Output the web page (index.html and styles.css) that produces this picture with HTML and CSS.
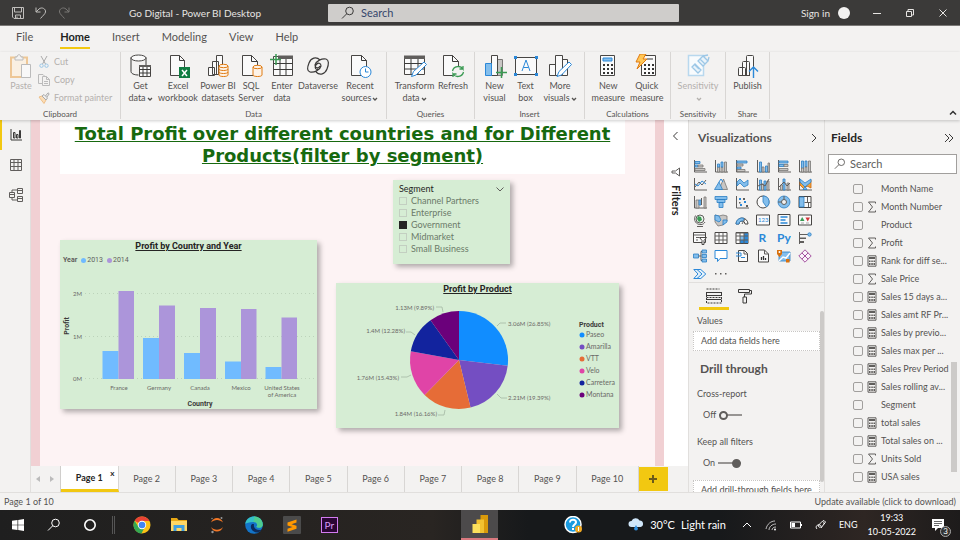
FILE: index.html
```html
<!DOCTYPE html>
<html lang="en">
<head>
<meta charset="utf-8">
<title>Go Digital - Power BI Desktop</title>
<link rel="stylesheet" href="styles.css">
</head>
<body>
<svg class="defs" aria-hidden="true">
  <symbol id="chev-down" viewBox="0 0 6 6"><path class="cur" d="M1 2l2 2 2-2"/></symbol>
  <symbol id="magnifier" viewBox="0 0 14 14"><circle class="cur" cx="8.5" cy="5" r="3.8"/><path class="cur" d="M5.7 7.8L1 12.5"/></symbol>
  <symbol id="sigma" viewBox="0 0 10 12"><path class="g" d="M8.5 2.5V1H1.5L5.5 6l-4 5h7V9.500"/></symbol>
  <symbol id="calc" viewBox="0 0 10 12"><path class="g" d="M1 .8h8v10.400H1z"/><path class="gf" d="M2 2h6v2H2zM2 5.500h1.500V7H2zM4.300 5.500h1.500V7H4.300zM6.500 5.500H8V7H6.500zM2 8h1.500v2H2zM4.300 8h1.500v2H4.300zM6.500 8H8v2H6.500z"/></symbol>
</svg>

<header class="titlebar">
  <div class="title-left">
    <button class="bare" aria-label="Save"><svg width="12" height="12" viewBox="0 0 12 12"><path class="cur" d="M.5.5h11v11H2L.5 10zM2.500.5V5h7V.5M3.500 11.500V8h5v3.500M5 11V9.500"/></svg></button>
    <button class="bare" aria-label="Undo"><svg width="12" height="12" viewBox="0 0 12 12"><path class="cur" d="M1 .5v4.500h4.500M1 5l3-3c3-2.500 7 0 6.500 3-.3 2-3 4-5 6.500"/></svg></button>
    <button class="bare dim" aria-label="Redo"><svg width="12" height="12" viewBox="0 0 12 12"><path class="cur" d="M11 .5v4.500H6.500M11 5L8 2C5-.5 1 2 1.500 5c.3 2 3 4 5 6.500"/></svg></button>
    <span class="app-title">Go Digital - Power BI Desktop</span>
  </div>
  <label class="top-search"><svg width="14" height="14"><use href="#magnifier"/></svg><input type="text" placeholder="Search" aria-label="Search"></label>
  <div class="title-right">
    <button class="bare">Sign in</button>
    <span class="avatar"></span>
    <button class="bare win" aria-label="Minimize"><svg width="10" height="10" viewBox="0 0 10 10"><path class="cur" d="M1 5.500h8"/></svg></button>
    <button class="bare win" aria-label="Restore"><svg width="10" height="10" viewBox="0 0 10 10"><path class="cur" d="M1.500 3.500h5v5h-5zM3 3.500v-2h5.500V7h-2"/></svg></button>
    <button class="bare win" aria-label="Close"><svg width="10" height="10" viewBox="0 0 10 10"><path class="cur" d="M1.500 1.500l7 7M8.500 1.500l-7 7"/></svg></button>
  </div>
</header>

<nav class="menu">
  <button class="file">File</button><button class="on">Home</button><button>Insert</button><button>Modeling</button><button>View</button><button>Help</button>
</nav>

<section class="ribbon">
  <div class="group clipboard">
    <div class="tools">
      <button class="tool off"><svg width="24" height="24" viewBox="0 0 24 24"><path d="M2 3.500h16V23H2z" fill="#faf0e2" stroke="#eec796" stroke-width="2"/><path d="M6 6V3h2c0-3 4-3 4 0h2v3z" fill="#f3f2f1" stroke="#bbb"/><path d="M12.500 10.500h9v13h-9z" fill="#f8f8f8" stroke="#bbb"/></svg><span>Paste</span></button>
      <div class="stack">
        <button class="small off"><svg width="12" height="12" viewBox="0 0 12 12"><path d="M3 0l4.500 8M9 0L4.500 8" fill="none" stroke="#aaa"/><circle cx="3.500" cy="9.700" r="1.700" fill="none" stroke="#9cc7e6"/><circle cx="8.500" cy="9.700" r="1.700" fill="none" stroke="#9cc7e6"/></svg>Cut</button>
        <button class="small off"><svg width="12" height="12" viewBox="0 0 12 12"><path d="M4 9.500H.5v-9H5l2 2M4.500 2.500h4l3 3v6h-7zM8.500 2.500v3h3M6 7.500h4M6 9.500h4" fill="none" stroke="#bbb"/></svg>Copy</button>
        <button class="small off"><svg width="12" height="12" viewBox="0 0 12 12"><path d="M1 5l3-1 4 4-2 3.500z" fill="#fbdcb5" stroke="#edc08a"/><path d="M4 4l2-1.500 3.500 3.500L8 8zM7.500 4L10 .8l1.200 1L9 5" fill="#eee" stroke="#aaa"/></svg>Format painter</button>
      </div>
    </div>
    <h3>Clipboard</h3>
  </div>
  <div class="group data">
    <div class="tools">
      <button class="tool"><svg width="24" height="24" viewBox="0 0 24 24"><path class="k" d="M2 3.500v14c0 2 3 3.500 7.500 3.500M17 3.500V11"/><ellipse class="w" cx="9.500" cy="4" rx="7.500" ry="3"/><path class="w" d="M10.500 11.500h11v11h-11z"/><path class="k" d="M10.500 15.500h11M10.500 19h11M14 13v9M18 13v9"/><path class="gf" d="M10 11h12v2H10z"/></svg><span>Get<br>data<svg class="cv" width="6" height="6"><use href="#chev-down"/></svg></span></button>
      <button class="tool"><svg width="24" height="24" viewBox="0 0 24 24"><path class="w" d="M4.500 1.500h9l5 5v15h-14z"/><path class="k" d="M13.500 1.500v5h5"/><path d="M13 13h11v11H13z" fill="#107c41"/><path d="M16 16l5 6M21 16l-5 6" stroke="#fff" stroke-width="1.500"/></svg><span>Excel<br>workbook</span></button>
      <button class="tool"><svg width="24" height="24" viewBox="0 0 24 24"><path class="w" d="M10.500 1.500h6v19h-6zM6.500 7.500h6v13h-6zM2.500 13.500h6v8h-6z"/><path class="o" d="M13 12v9c0 2 9 2 9 0v-9M13 15c0 2 9 2 9 0M13 18c0 2 9 2 9 0"/><ellipse class="o" cx="17.500" cy="12" rx="4.500" ry="1.700"/></svg><span>Power BI<br>datasets</span></button>
      <button class="tool"><svg width="24" height="24" viewBox="0 0 24 24"><path class="w" d="M3.500 1.500h9l6 6v14h-15z"/><path class="k" d="M12.500 1.500v6h6"/><path class="o" d="M14 13v8c0 2 9 2 9 0v-8"/><ellipse class="o" cx="18.500" cy="13" rx="4.500" ry="1.700"/></svg><span>SQL<br>Server</span></button>
      <button class="tool"><svg width="24" height="24" viewBox="0 0 24 24"><path class="w" d="M3.500 2.500h19v19h-19z"/><path class="k" d="M3.500 9.500h19M3.500 15.500h19M10 5v16M16 5v16"/><path class="gf" d="M8 1.500h15V5H8z"/><path d="M6 0v11M0 5.500h11" stroke="#3a9a53" stroke-width="1.500"/></svg><span>Enter<br>data</span></button>
      <button class="tool"><svg width="24" height="24" viewBox="0 0 24 24"><path class="k" d="M14 6C10 2 5 4 3 9s-2 8 1 9c4 1 10-2 11-6 0-3-3-4-5-1s0 5 2 4M10 18c4 4 9 2 11-3s2-9-1-10c-4-1-10 2-11 6 0 3 3 4 5 1" stroke-width="1.200"/></svg><span>Dataverse</span></button>
      <button class="tool"><svg width="24" height="24" viewBox="0 0 24 24"><path class="w" d="M3.500 1.500h10l5 5v15h-15z"/><path class="k" d="M13.500 1.500v5h5"/><circle cx="17.500" cy="18" r="5.500" fill="#fff" stroke="#2b88d8"/><path class="n" d="M17.500 14.500V18h3"/></svg><span>Recent<br>sources<svg class="cv" width="6" height="6"><use href="#chev-down"/></svg></span></button>
    </div>
    <h3>Data</h3>
  </div>
  <div class="group queries">
    <div class="tools">
      <button class="tool"><svg width="24" height="24" viewBox="0 0 24 24"><path class="w" d="M1.500 2.500h20v18h-20z"/><path class="k" d="M1.500 9.500h20M1.500 15h20M8 5v15M15 5v15"/><path class="gf" d="M1 1.500h21V5H1z"/><path d="M8.500 22.500l2-5L21 8l2.500 2.500L13 21z" fill="#fff" stroke="#2b88d8"/></svg><span>Transform<br>data<svg class="cv" width="6" height="6"><use href="#chev-down"/></svg></span></button>
      <button class="tool"><svg width="24" height="24" viewBox="0 0 24 24"><path class="w" d="M2.500 1.500h9l6 6v14h-15z"/><path class="k" d="M11.500 1.500v6h6"/><circle cx="17" cy="18" r="6" fill="#f3f2f1"/><path d="M11.500 17c1-5 8-6 10.500-2v-3M22 15h-3.500M22.500 18c-1 5-8 6-10.500 2v3M12 20h3.500" fill="none" stroke="#3a9a53" stroke-width="1.300"/></svg><span>Refresh</span></button>
    </div>
    <h3>Queries</h3>
  </div>
  <div class="group insert">
    <div class="tools">
      <button class="tool"><svg width="24" height="24" viewBox="0 0 24 24"><path d="M13.500 5.500h6v16h-6z" fill="#c8c6c4" stroke="#797775"/><path class="w" d="M8.500 1.500h6v20h-6z"/><path d="M2.500 9.500h6v12h-6z" fill="#83beec" stroke="#2b88d8"/><path d="M18.500 13v11M13 18.500h11" stroke="#3a9a53" stroke-width="1.500"/></svg><span>New<br>visual</span></button>
      <button class="tool"><svg width="24" height="24" viewBox="0 0 24 24"><path class="w" d="M1.500 3.500h21v17h-21z"/><path d="M0 2h3v3H0zM21 2h3v3h-3zM0 19h3v3H0zM21 19h3v3h-3z" fill="#2b88d8"/><path class="n" d="M8 17l4-11 4 11M9.500 13.500h5"/></svg><span>Text<br>box</span></button>
      <button class="tool"><svg width="24" height="24" viewBox="0 0 24 24"><path class="w" d="M14.500 5.500h5v16h-5zM7.500 1.500h7v20h-7zM1.500 10.500h6v11h-6z"/><path d="M9 22.500l2-5L21 8l2.500 2.500L13.500 21z" fill="#fff" stroke="#2b88d8"/></svg><span>More<br>visuals<svg class="cv" width="6" height="6"><use href="#chev-down"/></svg></span></button>
    </div>
    <h3>Insert</h3>
  </div>
  <div class="group calcs">
    <div class="tools">
      <button class="tool"><svg width="24" height="24" viewBox="0 0 24 24"><path class="w" d="M4.500 1.500h14v20h-14z"/><path d="M7 4h9v3H7z" fill="#83beec" stroke="#2b88d8"/><path d="M7 11h10M7 15h10M7 19h10" stroke="#333" stroke-width="2" stroke-dasharray="2 2"/></svg><span>New<br>measure</span></button>
      <button class="tool"><svg width="24" height="24" viewBox="0 0 24 24"><path class="w" d="M6.500 1.500h14v20h-14z"/><path d="M12 5h6" stroke="#999" stroke-width="2"/><path d="M9 11h10M9 15h10M9 19h10" stroke="#333" stroke-width="2" stroke-dasharray="2 2"/><path d="M5 0h6L8 5h4L2 15l3-7H1z" fill="#ffc757" stroke="#e07a10"/></svg><span>Quick<br>measure</span></button>
    </div>
    <h3>Calculations</h3>
  </div>
  <div class="group sens">
    <div class="tools">
      <button class="tool off"><svg width="24" height="24" viewBox="0 0 24 24"><path d="M2.500 1.500h15v20h-15z" fill="#f8fbfd" stroke="#b8d8ee" stroke-width="1.500"/><path d="M6 13l3-3 6 6-3 3zM9 11l4 4M12 7l5-5 5 5-5 5zM14 5l5 5M17 2l5-1M22 7l1-4" fill="#e9f3fa" stroke="#9cc7e6" stroke-width="1.300"/></svg><span>Sensitivity<br><svg class="cv" width="6" height="6"><use href="#chev-down"/></svg></span></button>
    </div>
    <h3>Sensitivity</h3>
  </div>
  <div class="group share">
    <div class="tools">
      <button class="tool"><svg width="24" height="24" viewBox="0 0 24 24"><path class="w" d="M10.500 2.500q0-1 1-1h5q1 0 1 1v19h-7zM6.500 8.500q0-1 1-1h5q1 0 1 1v13h-7zM2.500 14.500q0-1 1-1h5q1 0 1 1v7h-7z"/><path d="M14 13h8v11h-8z" fill="#f3f2f1"/><path d="M17.500 24V13M13 17.500l4.500-4.500 4.500 4.500" fill="none" stroke="#2b88d8" stroke-width="1.400"/></svg><span>Publish</span></button>
    </div>
    <h3>Share</h3>
  </div>
  <button class="bare collapse" aria-label="Collapse ribbon"><svg width="8" height="8" viewBox="0 0 8 8"><path d="M1 5.500l3-3 3 3" fill="none" stroke="#333" stroke-width="1.500"/></svg></button>
</section>

<main class="work">
  <nav class="rail">
    <button class="on" aria-label="Report"><svg width="12" height="12" viewBox="0 0 12 12"><path class="k" d="M1 0v11h11M3.500 9V3.500H5V9zM6.500 9V5.500H8V9zM9.500 9V1.500h1V9z"/></svg></button>
    <button aria-label="Data"><svg width="12" height="12" viewBox="0 0 12 12"><path class="g" d="M.5.5h11v11H.5zM.5 3.500h11M.5 7.500h11M4 .5v11M8 .5v11"/></svg></button>
    <button aria-label="Model"><svg width="14" height="14" viewBox="0 0 14 14"><path class="g" d="M.5 4.500h5v5h-5zM.5 6.500h5M8.500.5h5v5h-5zM8.500 2.500h5M8.500 8.500h5v5h-5zM8.500 10.500h5M3 4V2h5M3 10v2h5"/></svg></button>
  </nav>

  <div class="center">
    <div class="stage">
      <div class="canvas">
        <h1>Total Profit over different countries and for Different Products(filter by segment)</h1>
        <div class="visuals">
          <section class="tile bars">
            <h2>Profit by Country and Year</h2>
            <p class="legend"><b>Year</b><i class="dot c13"></i>2013<i class="dot c14"></i>2014</p>
            <svg class="plot" viewBox="0 0 257 143" role="img" aria-label="Profit by country and year">
              <path class="gridline" d="M25 27.500h230M25 70.500h230M25 112.500h230"/>
              <g class="b13"><path d="M42.500 85h16v28h-16zM83 72h16v41H83zM124 87h16v26h-16zM165 95.500h16V113h-16zM205.500 101h16v12h-16z"/></g>
              <g class="b14"><path d="M58.500 25h15.500v88H58.500zM99 39.500h16V113H99zM140 42h16v71h-16zM181 43h15.500v70H181zM221.500 51.500H237V113h-15.500z"/></g>
              <g class="ax"><text x="13" y="30">2M</text><text x="13" y="73">1M</text><text x="13" y="115">0M</text></g>
              <g class="ax mid"><text x="59" y="124">France</text><text x="99" y="124">Germany</text><text x="140" y="124">Canada</text><text x="181" y="124">Mexico</text><text x="222" y="124">United States</text><text x="222" y="131">of America</text></g>
              <g class="axt mid"><text x="140" y="140">Country</text><text transform="translate(9 60) rotate(-90)">Profit</text></g>
            </svg>
          </section>
          <div class="right">
            <div class="tile slicer" role="group" aria-labelledby="segment-title">
              <div class="slicer-head"><span id="segment-title">Segment</span><svg width="8" height="8" viewBox="0 0 8 8"><path class="g" d="M.5 2.500L4 6l3.500-3.500"/></svg></div>
              <label><input type="checkbox">Channel Partners</label>
              <label><input type="checkbox">Enterprise</label>
              <label><input type="checkbox" checked>Government</label>
              <label><input type="checkbox">Midmarket</label>
              <label><input type="checkbox">Small Business</label>
            </div>
            <section class="tile pie">
              <h2>Profit by Product</h2>
              <svg class="plot" viewBox="0 0 283 133" role="img" aria-label="Profit by product">
                <path fill="#118dff" d="M123 65V16A49 49 0 0 1 171.700 70.700z"/>
                <path fill="#744ec2" d="M123 65L171.700 70.700A49 49 0 0 1 134.500 112.600z"/>
                <path fill="#e66c37" d="M123 65L134.500 112.600A49 49 0 0 1 88.600 99.900z"/>
                <path fill="#e044a7" d="M123 65L88.600 99.900A49 49 0 0 1 74.800 56.300z"/>
                <path fill="#12239e" d="M123 65L74.800 56.300A49 49 0 0 1 94.500 25.200z"/>
                <path fill="#6b007b" d="M123 65L94.500 25.200A49 49 0 0 1 123 16z"/>
                <path class="lead" d="M161 31l3-3h6M161 99l4 4h6M109 115l-1 5h-6M75 80l-4 2h-6M79 40l-4-3h-5M107 17l-1-5h-6"/>
                <g class="ax"><text x="172" y="31">3.06M (26.85%)</text><text x="172" y="105">2.21M (19.39%)</text></g>
                <g class="ax end"><text x="101" y="121">1.84M (16.16%)</text><text x="63" y="85">1.76M (15.43%)</text><text x="69" y="38">1.4M (12.28%)</text><text x="98" y="15">1.13M (9.89%)</text></g>
                <text class="axt" x="243" y="32">Product</text>
                <circle cx="246" cy="40" r="2.500" fill="#118dff"/><circle cx="246" cy="52" r="2.500" fill="#744ec2"/><circle cx="246" cy="64" r="2.500" fill="#e66c37"/><circle cx="246" cy="76" r="2.500" fill="#e044a7"/><circle cx="246" cy="88" r="2.500" fill="#12239e"/><circle cx="246" cy="100" r="2.500" fill="#6b007b"/>
                <g class="lg"><text x="250" y="42">Paseo</text><text x="250" y="54">Amarilla</text><text x="250" y="66">VTT</text><text x="250" y="78">Velo</text><text x="250" y="90">Carretera</text><text x="250" y="102">Montana</text></g>
              </svg>
            </section>
          </div>
        </div>
      </div>
      <aside class="filters">
        <svg width="8" height="10" viewBox="0 0 8 10"><path class="k" d="M5.500 1L1.500 5l4 4"/></svg>
        <svg width="10" height="10" viewBox="0 0 10 10"><path class="g" d="M8.500 1v8L4.500 6H1V4h3.500z"/></svg>
        <span>Filters</span>
      </aside>
    </div>
    <nav class="pages">
      <div class="arrows"><svg width="4" height="6" viewBox="0 0 4 6"><path d="M4 0v6L0 3z" fill="#bbb"/></svg><svg width="4" height="6" viewBox="0 0 4 6"><path d="M0 0v6l4-3z" fill="#bbb"/></svg></div>
      <button class="page on">Page 1<span class="x">x</span></button><button class="page">Page 2</button><button class="page">Page 3</button><button class="page">Page 4</button><button class="page">Page 5</button><button class="page">Page 6</button><button class="page">Page 7</button><button class="page">Page 8</button><button class="page">Page 9</button><button class="page">Page 10</button>
      <button class="add" aria-label="New page"><svg width="10" height="10" viewBox="0 0 10 10"><path d="M5 1v8M1 5h8" stroke="#6b5a1a" stroke-width="2"/></svg></button>
    </nav>
  </div>

  <aside class="viz">
    <header><h2>Visualizations</h2><svg width="8" height="10" viewBox="0 0 8 10"><path class="k" d="M2 1l4 4-4 4"/></svg></header>
    <div class="gallery">
      <svg viewBox="0 0 14 14"><path class="g" d="M1.500 1v12H14"/><path class="b" d="M2 2.500h5v2H2zM2 6h3v2H2z"/><path class="l" d="M5 6h5v2H5zM2 9.500h10v2H2z"/></svg>
      <svg viewBox="0 0 14 14"><path class="g" d="M1.500 1v12H14"/><path class="l" d="M3.500 8h2v5h-2zM7 8h2v5H7zM10.500 3h2v10h-2z"/><path class="b" d="M3.500 5h2v3h-2zM7 3h2v5H7z"/></svg>
      <svg viewBox="0 0 14 14"><path class="g" d="M1.500 1v12H14"/><path class="b" d="M2 2h10v2H2zM2 8h4v2H2z"/><path class="l" d="M2 5h6v2H2zM2 10.500h8v2H2z"/></svg>
      <svg viewBox="0 0 14 14"><path class="g" d="M1.500 1v12H14"/><path class="b" d="M3.500 3h2v10h-2zM9.500 7h2v6h-2z"/><path class="l" d="M6 8h2v5H6zM12 4h1.500v9H12z"/></svg>
      <svg viewBox="0 0 14 14"><path class="g" d="M1.500 1v12H14"/><path class="b" d="M2 2h9v2H2zM2 5.500h5v2H2z"/><path class="l" d="M7 5.500h4v2H7zM2 9.500h9v2H2z"/></svg>
      <svg viewBox="0 0 14 14"><path class="g" d="M1.500 1v12H14"/><path class="b" d="M3.500 2h2v8h-2zM7 2h2v6H7z"/><path class="l" d="M3.500 9h2v4h-2zM7 8h2v5H7zM10.500 2h2v11h-2z"/></svg>

      <svg viewBox="0 0 14 14"><path class="g" d="M1.500 1v12H14M2 10l4-5 3 3 4-5"/><path class="n" d="M2 7l3 2 4-5 4 3"/></svg>
      <svg viewBox="0 0 14 14"><path class="l" d="M5 12.500L9.500 2l4 10.500z"/><path class="b" d="M.5 12.500L5 5l3.500 7.500z"/><path class="n" d="M5 5l2-3 2 3"/></svg>
      <svg viewBox="0 0 14 14"><path class="g" d="M1.500 1v12H14"/><path class="b" d="M2 5l3-3 4 4 4-3v5L9 10 5 6 2 9z"/></svg>
      <svg viewBox="0 0 14 14"><path class="g" d="M1.500 1v12H14"/><path class="b" d="M3.500 3h2v10h-2zM8 4h2v9H8z"/><path class="l" d="M5.500 7h2v6h-2zM11 4h2v9h-2z"/><path class="g" d="M2 9l4-2 3 2 4-7"/></svg>
      <svg viewBox="0 0 14 14"><path class="g" d="M1.500 1v12H14"/><path class="b" d="M6 2h2v11H6z"/><path class="l" d="M3.500 8h2v5h-2zM10 6h2v7h-2z"/><path class="g" d="M2 10l5-5 3 4 3-3"/></svg>
      <svg viewBox="0 0 14 14"><path class="g" d="M1.500 1v12H14"/><path d="M2 4l4 4 7-5v8l-4-2-3 3-4-4z" fill="#f2a33a" stroke="#c7660c" stroke-width=".8"/><path class="b" d="M2 2l5 4 6-4v3L7 10 2 5zM5 12.500l2-3 2 3z"/></svg>

      <svg viewBox="0 0 14 14"><path class="g" d="M1.500 1v12H14"/><path class="l" d="M3 5h3v8H3zM11 2h2v11h-2z"/><path class="b" d="M6 5h2v5H6z"/><path class="g" d="M8.500 3v7"/></svg>
      <svg viewBox="0 0 14 14"><path class="b" d="M1 1.500h12v3H1zM3 4.500h8v3H3zM5 7.500h4v5H5z"/></svg>
      <svg viewBox="0 0 14 14"><path class="g" d="M1.500 1v12H14"/><path d="M4 3h2v2H4zM9 6h2v2H9zM5 9h2v2H5z" fill="#2b88d8"/><path class="gf" d="M8 3h2v2H8zM11 10h2v2h-2zM4 7h1.500v1.500H4z"/></svg>
      <svg viewBox="0 0 14 14"><circle class="w" cx="7" cy="7" r="6"/><path class="b" d="M7 7V1a6 6 0 0 1 3.500 11z"/></svg>
      <svg viewBox="0 0 14 14"><circle class="b" cx="7" cy="7" r="6"/><circle cx="7" cy="7" r="2.500" fill="#f3f2f1" stroke="#605e5c"/><path class="g" d="M7 1v3.500M1 7h3.500"/></svg>
      <svg viewBox="0 0 14 14"><path class="w" d="M1 1.500h12v11H1z"/><path class="b" d="M1.500 2H6v10H1.500z"/><path class="g" d="M6.500 7.500H13M9.500 2v5M10.500 8v4"/></svg>

      <svg viewBox="0 0 14 14"><circle cx="7" cy="6" r="4" fill="#e9f4ec" stroke="#605e5c"/><path d="M5 3l3 1 1 3-3 2-2-3z" fill="#3a9a53"/><path class="g" d="M2.500 2.500C0 7 3 12 8 11.500c2 0 3-1 4-2.500M4 13.500h6"/></svg>
      <svg viewBox="0 0 14 14"><path class="l" d="M1 2l4 1 4-1 4 1v5l-4 4-5 1-3-4z"/><path class="b" d="M1 2l4 1 2 4-2 2-4-2zM9 7h4v2l-4 3z"/></svg>
      <svg viewBox="0 0 14 14"><path class="w" d="M1 11a6 6 0 0 1 12 0h-3a3 3 0 0 0-6 0z"/><path class="b" d="M1 11a6 6 0 0 1 8-5.700L8 8a3 3 0 0 0-4 3z"/><path class="g" d="M7 11l3-5"/></svg>
      <svg viewBox="0 0 14 14"><path class="w" d="M.5 2h13v10H.5z"/><text x="2" y="9" class="mini">123</text></svg>
      <svg viewBox="0 0 14 14"><path class="w" d="M1 1.500h12v11H1z"/><path d="M3.500 4h7M3.500 7h5M3.500 10h7" stroke="#2b88d8" stroke-width="1.500"/></svg>
      <svg viewBox="0 0 14 14"><path class="w" d="M.5 2h13v10H.5z"/><path d="M2 8l2.200-4L6.500 8z" fill="#3a9a53"/><path d="M7.500 4.500H12L9.700 8.500z" fill="#d13438"/><path d="M3 10h3M8 10h3" stroke="#aaa"/></svg>

      <svg viewBox="0 0 14 14"><path class="w" d="M.5 1.500h12v10H.5z"/><path class="g" d="M1 4h11M3 6.500h3M3 9h2"/><path class="w" d="M6.500 6.500h7l-2.500 3v4H9v-4z"/></svg>
      <svg viewBox="0 0 14 14"><path class="w" d="M1 1.500h12v11H1z"/><path class="g" d="M1 5h12M1 9h12M5 1.500v11M9 1.500v11"/></svg>
      <svg viewBox="0 0 14 14"><path class="w" d="M1 1.500h12v11H1z"/><path d="M9 2h4v10H5V9h4z" fill="#2b88d8"/><path d="M5 5h4v4H5z" fill="#83beec"/><path class="g" d="M1 5h12M1 9h12M5 1.500v11M9 1.500v11M1 2h12"/></svg>
      <svg viewBox="0 0 14 14"><text x="2.500" y="11" class="code">R</text></svg>
      <svg viewBox="0 0 14 14"><text x="0" y="11" class="code">Py</text></svg>
      <svg viewBox="0 0 14 14"><path class="g" d="M1.500 1v12M2 3.500h8M2 7h6M2 7.500h6M2 10.500h4M2 11.500h4"/><circle class="b" cx="11.500" cy="3.500" r="1.700"/></svg>

      <svg viewBox="0 0 14 14"><path class="b" d="M.5 5h5v4h-5z"/><path class="g" d="M5.500 7H8M8 2.500v9M8 2.500h2M8 11.500h2"/><path class="b" d="M9 1h4.500v3H9zM9 5.500h4.500v3H9zM9 10h4.500v3H9z"/></svg>
      <svg viewBox="0 0 14 14"><path d="M1 1.500h12v8H6L3.500 12.500V9.500H1z" fill="#fff" stroke="#2b88d8"/></svg>
      <svg viewBox="0 0 14 14"><path class="w" d="M3.500 1.500h6l3 3v8h-9z"/><path class="n" d="M1 4h5v3H1M6 8.500h4"/><path class="g" d="M9 1.500V5h3.500"/></svg>
      <svg viewBox="0 0 14 14"><path class="w" d="M2.500 1h6l4 4v8h-10z"/><path d="M5.500 11V8M7.500 11V7M9.500 11V9" stroke="#333" stroke-width="1.300"/><path class="g" d="M8.500 1v4h4"/></svg>
      <svg viewBox="0 0 14 14"><path class="b" d="M2 3h11v9H2z"/><path d="M2 12l4-4 3 1 4-5" fill="none" stroke="#fff" stroke-width="1.500"/><path d="M0 1h5v4L2.500 8 0 5z" fill="#d9700d"/><circle cx="2.500" cy="3" r="1" fill="#fff"/><path d="M9 10h3.500v3.500H9z" fill="#d9700d"/></svg>
      <svg viewBox="0 0 14 14"><path d="M7 .8L13.200 7 7 13.200.8 7zM3.900 3.900l6.200 6.200M10.100 3.900l-6.200 6.200" fill="#fbf3fb" stroke="#a4509f"/></svg>

      <svg viewBox="0 0 14 14"><path d="M.8 2.500h7L12.800 7l-5 4.500h-7L5 7zM4 2.500L9 7l-5 4.500" fill="#e6f2fb" stroke="#2b88d8"/></svg>
      <svg viewBox="0 0 14 14"><path class="gf" d="M1 6h1.500v1.500H1zM6 6h1.500v1.500H6zM11 6h1.500v1.500H11z"/></svg>
    </div>
    <div class="build">
      <button class="bare on" aria-label="Fields"><svg width="16" height="16" viewBox="0 0 16 16"><path class="k" d="M.5 4.500h15v3H.5zM.5 11.500h15"/><path class="k" stroke-dasharray="2 1" d="M.5 1h13M.5 4v11h15V4M.5 9.500h15"/></svg></button>
      <button class="bare" aria-label="Format"><svg width="16" height="16" viewBox="0 0 16 16"><path class="k" d="M1.500 1.500h11v3h-11zM12.500 2.500h2v3.500h-7v3M6 9h3.500v6H6z"/></svg></button>
    </div>
    <div class="wells">
      <p>Values</p>
      <div class="well">Add data fields here</div>
      <h3>Drill through</h3>
      <p>Cross-report</p>
      <label class="switch">Off<input type="checkbox" role="switch" aria-label="Cross-report"></label>
      <p>Keep all filters</p>
      <label class="switch">On<input type="checkbox" role="switch" aria-label="Keep all filters" checked></label>
      <div class="well">Add drill-through fields here</div>
      <i class="thumb"></i>
    </div>
  </aside>

  <aside class="fields">
    <header><h2>Fields</h2><svg width="10" height="10" viewBox="0 0 10 10"><path class="k" d="M1 1l4 4-4 4M5 1l4 4-4 4"/></svg></header>
    <label class="search"><svg width="12" height="12"><use href="#magnifier"/></svg><input type="text" placeholder="Search" aria-label="Search fields"></label>
    <div class="list">
      <label><input type="checkbox"><i></i><span>Month Name</span></label>
      <label><input type="checkbox"><svg><use href="#sigma"/></svg><span>Month Number</span></label>
      <label><input type="checkbox"><i></i><span>Product</span></label>
      <label><input type="checkbox"><svg><use href="#sigma"/></svg><span>Profit</span></label>
      <label><input type="checkbox"><svg><use href="#calc"/></svg><span>Rank for diff se...</span></label>
      <label><input type="checkbox"><svg><use href="#sigma"/></svg><span>Sale Price</span></label>
      <label><input type="checkbox"><svg><use href="#calc"/></svg><span>Sales 15 days a...</span></label>
      <label><input type="checkbox"><svg><use href="#calc"/></svg><span>Sales amt RF Pr...</span></label>
      <label><input type="checkbox"><svg><use href="#calc"/></svg><span>Sales by previo...</span></label>
      <label><input type="checkbox"><svg><use href="#calc"/></svg><span>Sales max per ...</span></label>
      <label><input type="checkbox"><svg><use href="#calc"/></svg><span>Sales Prev Period</span></label>
      <label><input type="checkbox"><svg><use href="#calc"/></svg><span>Sales rolling av...</span></label>
      <label><input type="checkbox"><i></i><span>Segment</span></label>
      <label><input type="checkbox"><svg><use href="#calc"/></svg><span>total sales</span></label>
      <label><input type="checkbox"><svg><use href="#calc"/></svg><span>Total sales on ...</span></label>
      <label><input type="checkbox"><svg><use href="#sigma"/></svg><span>Units Sold</span></label>
      <label><input type="checkbox"><svg><use href="#calc"/></svg><span>USA sales</span></label>
      <b class="thumb"></b>
    </div>
  </aside>
</main>

<footer class="status"><span>Page 1 of 10</span><a href="#">Update available (click to download)</a></footer>

<div class="taskbar">
  <div class="sys">
    <button aria-label="Start"><svg width="12" height="12" viewBox="0 0 12 12"><path d="M0 1.800L5.500 1v4.700H0zM6.200.9L12 0v5.700H6.200zM0 6.300h5.500V11L0 10.300zM6.200 6.300H12V12l-5.800-.9z" fill="#fff"/></svg></button>
    <button aria-label="Search"><svg width="14" height="14"><use href="#magnifier"/></svg></button>
    <button aria-label="Cortana"><svg width="14" height="14" viewBox="0 0 14 14"><circle cx="7" cy="7" r="5.200" fill="none" stroke="#fff" stroke-width="1.600"/></svg></button>
  </div>
  <span class="handle"></span>
  <div class="apps">
    <button aria-label="Chrome"><svg width="18" height="18" viewBox="0 0 18 18"><circle cx="9" cy="9" r="8.500" fill="#fbc116"/><path d="M9 9L1.600 4.800A8.500 8.500 0 0 1 16.500 5H9z" fill="#ea4335"/><path d="M1.600 4.800A8.500 8.500 0 0 0 8.500 17.500L12 10.500 9 9l-3.500 2z" fill="#34a853"/><circle cx="9" cy="9" r="4.200" fill="#fff"/><circle cx="9" cy="9" r="3.300" fill="#4285f4"/></svg></button>
    <button aria-label="File Explorer"><svg width="18" height="16" viewBox="0 0 18 16"><path d="M1 1h6l1.500 2H17v5H1z" fill="#e8a815"/><path d="M1 4h16v10H1z" fill="#ffd764"/><path d="M3.500 14V8h11v6h-3v-3h-5v3z" fill="#3f9fe0"/></svg></button>
    <button aria-label="Jupyter"><svg width="14" height="18" viewBox="0 0 14 18"><path d="M1 6.500C3 .5 11 .5 13 6.500 10 3 4 3 1 6.500zM1 11c2 6 10 6 12 0-3 3.500-9 3.500-12 0z" fill="#f37726"/><circle cx="11.500" cy="2" r="1" fill="#999"/><circle cx="2.500" cy="16" r="1.200" fill="#999"/><circle cx="2" cy="2.500" r=".7" fill="#999"/></svg></button>
    <button aria-label="Edge"><svg width="18" height="18" viewBox="0 0 18 18"><circle cx="9" cy="9" r="8.800" fill="#1374c8"/><path d="M.4 8C1-2 18-2.500 17.800 9c-.3 3-5 3.500-6.500 2 2-2 .5-5-3-5-4 0-7 1-7.900 2z" fill="#35c1c6"/><path d="M9 .2c5 0 9 4 8.800 8.800-.3 3-5 3.500-6.500 2 2-2 .5-5-3-5C9 4 10 2 9 .2z" fill="#5fd36a" opacity=".6"/><path d="M7 8c-3 3 0 9 6 8.500 1.500-.5 3-1.500 3.700-3C12 15.500 8 12 9 8z" fill="#0c2c5c"/></svg></button>
    <button aria-label="Sublime Text"><svg width="18" height="18" viewBox="0 0 18 18"><rect width="18" height="18" rx="1" fill="#4b4b4b"/><path d="M4.500 6.500l9-3v3l-5 1.700 5 1.500v3l-9 3v-3l5-1.700-5-1.500z" fill="#ff9800"/></svg></button>
    <button aria-label="Premiere Pro"><span class="pr">Pr</span></button>
  </div>
  <button class="active" aria-label="Power BI"><svg width="16" height="18" viewBox="0 0 16 18"><path d="M8.500 0H16v18H8.500z" fill="#d99a0b"/><path d="M4.500 4.500H12V18H4.500z" fill="#f2c230"/><path d="M.5 9H8v9H.5z" fill="#fbe05c"/></svg></button>
  <div class="tray">
    <svg class="help" width="20" height="18" viewBox="0 0 20 18"><circle cx="9" cy="8.500" r="8" fill="#1b9be0" stroke="#fff" stroke-width="1.500"/><path d="M6 6.500c0-4 6.500-3.500 6 0-.3 2-3 2-3 4.500M9 12v2" fill="none" stroke="#fff" stroke-width="2"/><circle cx="14.500" cy="13" r="3.500" fill="#f2a922"/><path d="M14.500 11v4" stroke="#fff"/></svg>
    <button class="weather"><svg width="16" height="14" viewBox="0 0 16 14"><path d="M3.500 9a3 3 0 0 1 0-6 4.500 4.500 0 0 1 8-.5A3.300 3.300 0 0 1 12.500 9z" fill="#cfe6fa"/><path d="M8 7l2 3.500a2 2 0 1 1-4 0z" fill="#2f8fe0"/></svg><span>30°C</span><span>Light rain</span></button>
    <div class="icons">
      <svg width="10" height="10" viewBox="0 0 10 10"><path class="cur" d="M1 7l4-4 4 4"/></svg>
      <svg width="12" height="12" viewBox="0 0 12 12"><path class="cur faint" d="M1 10C2 5 6 2 10 2M4 11c0-3 3-6 7-6M7 11c0-2 2-3 4-3"/><circle cx="10" cy="10.500" r="1" fill="#fff"/></svg>
      <svg width="12" height="8" viewBox="0 0 12 8"><path class="cur" d="M.5 1h10v6H.5zM11.500 3v2"/><path d="M1.500 2H5v4H1.500z" fill="#fff"/></svg>
      <svg width="12" height="12" viewBox="0 0 12 12"><path class="cur" d="M2 10c-2-2 0-5 3-4 2 1 1 3-1 2S6 3 9 1.500l1.500 1.500L6 9M8 3.500l2 1.500"/></svg>
    </div>
    <span class="lang">ENG</span>
    <div class="clock"><span>19:33</span><span>10-05-2022</span></div>
    <button class="notice" aria-label="Notifications"><svg width="14" height="14" viewBox="0 0 14 14"><path d="M0 1h12v9H6l-3 3v-3H0z" fill="#fff"/><path d="M2 3.500h8M2 5.500h8M2 7.500h5" stroke="#444" stroke-width=".8"/></svg><span>3</span></button>
  </div>
</div>
</body>
</html>
```
FILE: styles.css
```css
:root {
  --ui: Lato, "Noto Sans", sans-serif;
  --chart: Roboto, "Noto Sans", sans-serif;
  --panel: #f3f2f1;
  --line: #e1dfdd;
  --text: #555351;
  --accent: #f2c811;
  --tile: #d6edd4;
}
* { box-sizing: border-box; }
html, body { height: 100%; margin: 0; }
body {
  display: flex; flex-direction: column; overflow: hidden;
  font: 9px/12px var(--ui); color: var(--text); background: var(--panel);
}
button, input { font: inherit; color: inherit; }
button { border: 0; padding: 0; background: none; white-space: nowrap; }
h1, h2, h3, p { margin: 0; }
svg { display: block; flex: none; }
.defs { position: absolute; width: 0; height: 0; }
.cur { fill: none; stroke: currentColor; }
.faint { opacity: .7; }
.g { fill: none; stroke: #605e5c; }
.k { fill: none; stroke: #3b3a39; }
.w { fill: #fafafa; stroke: #484644; }
.l { fill: #c8c6c4; stroke: #797775; stroke-width: .8px; }
.b { fill: #83beec; stroke: #2b7fc4; stroke-width: .8px; }
.n { fill: none; stroke: #2b88d8; }
.o { fill: #fdf3e8; stroke: #e07a10; }
.gf { fill: #605e5c; }
.bare { display: flex; align-items: center; }

.titlebar {
  display: grid; grid-template-columns: 328fr 351fr 281fr; align-items: center;
  flex: none; height: 26px; border-bottom: 1px solid #7a7876; background: #3b3a39; color: #e6e4e2;
}
.title-left { display: flex; align-items: center; gap: 11px; padding-left: 12px; font-size: 9px; }
.title-left .bare { color: #c0bebc; }
.title-left .dim { color: #797775; }
.app-title { margin-left: 48px; }
.top-search { display: flex; align-items: center; gap: 6px; height: 18px; padding-left: 13px; border-radius: 1px; background: #cfcdcb; color: #3b3a39; }
.top-search input { width: 100%; border: 0; padding: 0; background: none; outline: 0; font-size: 11px; }
.top-search input::placeholder { color: #35466b; opacity: 1; }
.title-right { display: flex; align-items: center; justify-content: flex-end; padding-right: 12px; }
.avatar { width: 12px; height: 12px; margin: 0 22px 0 8px; border-radius: 50%; background: #f3f2f1; }
.win + .win { margin-left: 23px; }

.menu { display: flex; flex: none; gap: 22px; height: 26px; padding-left: 16px; font-size: 11px; }
.menu .file { margin-right: 5px; }
.menu button { height: 23px; border-bottom: 2px solid transparent; }
.menu .on { border-color: var(--accent); color: #201f1e; font-weight: 700; }

.titlebar .title-left, .title-right { font-size: 10px; }

.ribbon { position: relative; z-index: 1; display: flex; flex: none; height: 68px; background: var(--panel); box-shadow: 0 1px 3px #0003; }
.group { display: flex; flex-direction: column; justify-content: space-between; height: 67px; border-right: 1px solid #d8d6d4; padding: 2px 4px 0; }
.group h3 { font-size: 8px; line-height: 10px; font-weight: 400; text-align: center; }
.tools { display: flex; }
.tool { display: flex; flex: 1; flex-direction: column; align-items: center; justify-content: flex-start; gap: 2px; min-width: 0; text-align: center; }
.tool.off, .small.off { color: #b3b0ad; }
.cv { display: inline-block; margin-left: 1px; vertical-align: middle; stroke-width: 1.3px; }
.clipboard { width: 121px; }
.clipboard .tool { flex: none; width: 34px; }
.stack { display: flex; flex-direction: column; gap: 6px; padding-top: 2px; }
.small { display: flex; align-items: center; gap: 4px; height: 12px; }
.data { width: 266px; }
.data .tools { display: grid; grid-template-columns: 31px 44px 36px 30px 32px 40px 44px; }
.queries { width: 88px; }
.queries .tools { display: grid; grid-template-columns: 47px 30px; }
.insert { width: 110px; }
.insert .tools { display: grid; grid-template-columns: 31px 31px 38px; }
.calcs { width: 86px; }
.sens { width: 55px; }
.share { width: 44px; }
.collapse { margin: auto 3px 3px auto; }

.work { display: flex; flex: 1 1 0; min-height: 0; }
.rail { flex: none; width: 31px; border-right: 1px solid var(--line); }
.rail button { display: flex; align-items: center; justify-content: center; width: 100%; height: 30px; border-left: 2px solid transparent; }
.rail .on { border-color: var(--accent); }
.center { display: flex; flex: 1; flex-direction: column; min-width: 0; }
.stage { display: flex; flex: 1; min-height: 0; background: #fff; }
.canvas { flex: 1; overflow: hidden; border: solid #f1d0d3; border-width: 0 9px; background: #fdf3f4; padding: 0 30px 0 20px; }
.canvas h1 {
  padding: 3px 10px 7px; background: #fff; color: #17690f; text-align: center; text-decoration: underline;
  font: 700 18px/22px Verdana, "DejaVu Sans", sans-serif;
}
.visuals { display: flex; gap: 19px; padding: 6px 6px 0 0; }
.tile { background: var(--tile); box-shadow: 3px 3px 5px #0000004d; }
.tile h2 { color: #252423; text-align: center; text-decoration: underline; font: 700 9px/12px var(--chart); }
.bars { flex: 257; align-self: flex-start; margin-top: 60px; }
.right { display: flex; flex: 283; flex-direction: column; gap: 19px; }
.legend { display: flex; align-items: center; padding: 3px 3px 0; font: 7px/11px var(--chart); color: #605e5c; }
.dot { width: 5px; height: 5px; margin: 0 1px 0 4px; border-radius: 50%; }
.c13 { background: #70bbff; }
.c14 { background: #ac95da; }
.plot { width: 100%; height: auto; }
.gridline { fill: none; stroke: #bcd3ba; stroke-dasharray: 1 3; }
.b13 { fill: #70bbff; }
.b14 { fill: #ac95da; }
.ax, .lg { fill: #6b6967; font: 6px var(--ui); }
.lg { font-size: 7px; }
.axt { fill: #3b3a39; font: 700 7px var(--chart); }
.mid { text-anchor: middle; }
.end { text-anchor: end; }
.lead { fill: none; stroke: #a5b8a3; stroke-width: .8px; }
.slicer { width: 117px; height: 84px; margin-left: 57px; padding: 2px 6px; }
.slicer-head { display: flex; align-items: center; justify-content: space-between; height: 13px; color: #252423; }
.slicer label { display: flex; align-items: center; gap: 4px; height: 12px; color: #6b7a69; }
.slicer input { appearance: none; width: 8px; height: 8px; margin: 0; border: 1px solid #c3cfc1; }
.slicer input:checked { border-color: #252423; background: #252423; }
.filters { display: flex; flex: none; flex-direction: column; align-items: center; gap: 26px; width: 24px; padding-top: 11px; }
.filters span { margin-top: -18px; writing-mode: vertical-rl; color: #252423; font-size: 11px; font-weight: 700; }

.pages { display: flex; flex: none; height: 26px; padding-right: 20px; background: var(--panel); }
.arrows { display: flex; align-items: center; justify-content: space-between; width: 30px; padding: 0 6px 0 5px; border-right: 1px solid #d0cecc; }
.page { position: relative; flex: 1 1 auto; border-right: 1px solid #d8d6d4; }
.page.on { border-bottom: 3px solid var(--accent); background: #fff; color: #252423; font-weight: 700; }
.x { position: absolute; top: 1px; right: 3px; font-size: 8px; }
.add { display: flex; align-items: center; justify-content: center; width: 29px; height: 24px; margin: 1px 0; background: var(--accent); }

.viz { display: flex; flex: none; flex-direction: column; width: 137px; border: solid var(--line); border-width: 0 1px; }
.viz header, .fields header { display: flex; align-items: center; justify-content: space-between; height: 30px; padding: 6px 6px 0 9px; }
.viz h2 { font-size: 12px; line-height: 16px; }
.gallery { display: grid; grid-template-columns: repeat(6, 14px); gap: 4px 7px; justify-content: start; padding: 9px 4px 1px; border-bottom: 1px solid var(--line); }
.gallery svg { width: 14px; height: 14px; }
.mini { fill: #2b88d8; font: 6px var(--ui); }
.code { fill: #2b88d8; font: 700 12px var(--ui); }
.build { display: flex; flex: none; gap: 1px; padding: 5px 10px 0; }
.build .bare { justify-content: center; width: 30px; height: 22px; border-bottom: 3px solid transparent; padding-bottom: 3px; }
.build .on { border-color: var(--accent); }
.wells { position: relative; flex: 1; min-height: 0; overflow: hidden; padding: 4px 4px 0; }
.wells p { padding: 0 4px; line-height: 14px; }
.well { height: 20px; margin: 3px 0 9px; border: 1px dotted #c8c6c4; padding: 0 7px; background: #fff; line-height: 18px; white-space: nowrap; overflow: hidden; }
.wells h3 { padding: 0 7px; font-size: 12px; line-height: 18px; }
.wells h3 + p { margin-top: 9px; }
.switch { display: flex; align-items: center; gap: 3px; margin: 7px 0 10px; padding-left: 10px; line-height: 14px; }
.switch + p { margin-top: 13px; }
.switch input { appearance: none; display: flex; align-items: center; width: 23px; height: 9px; margin: 0; background: linear-gradient(#979593, #979593) center / 100% 2px no-repeat; }
.switch input::before { content: ""; box-sizing: border-box; width: 9px; height: 9px; border: 2px solid #605e5c; border-radius: 50%; background: var(--panel); }
.switch input:checked { justify-content: flex-end; }
.switch input:checked::before { background: #605e5c; }
.thumb { position: absolute; background: #cccac8; }
.wells .thumb { top: 1px; right: 0; width: 4px; bottom: 10px; border-radius: 2px; }

.fields { display: flex; flex: none; flex-direction: column; width: 135px; }
.fields header { padding-left: 6px; }
.fields h2 { color: #252423; font-size: 12px; line-height: 16px; }
.search { display: flex; flex: none; align-items: center; gap: 4px; height: 20px; margin: 4px 3px 6px; border: 1px solid #a19f9d; padding: 0 5px; background: #fff; }
.search input { width: 100%; border: 0; padding: 0; background: none; outline: 0; font-size: 11px; }
.search input::placeholder { color: #605e5c; opacity: 1; }
.list { position: relative; flex: 1; min-height: 0; overflow: hidden; }
.list label { display: grid; grid-template-columns: 10px 10px 1fr; align-items: center; gap: 4px; height: 18px; padding-left: 28px; white-space: nowrap; }
.list input { appearance: none; width: 10px; height: 10px; margin: 0; border: 1px solid #a19f9d; border-radius: 2px; }
.list svg { width: 10px; height: 12px; }
.list .thumb { right: 3px; top: 182px; bottom: 20px; width: 6px; }

.status { display: flex; flex: none; align-items: center; justify-content: space-between; height: 18px; border-top: 1px solid var(--line); padding: 0 4px; }
.status a { color: inherit; text-decoration: none; }

.taskbar { display: flex; flex: none; height: 30px; background: linear-gradient(90deg, #1f1f1f, #292522 45%, #17191b 55%, #17191b 75%, #2e2623 90%, #1d1b1b); color: #fff; }
.taskbar button { display: flex; align-items: center; justify-content: center; }
.sys { display: flex; width: 108px; }
.sys button, .apps button { flex: 1; }
.handle { width: 3px; height: 18px; margin: 6px 8px 6px 4px; border: solid #555; border-width: 0 1px; }
.apps { display: flex; width: 225px; }
.pr { width: 17px; height: 16px; border: 1px solid #d27bf0; background: #2a0634; color: #d79bf5; font-size: 10px; line-height: 14px; text-align: center; }
.active { width: 37px; margin-left: 113px; border-bottom: 2px solid #d9797f; background: #4c4a4b; }
.tray { display: flex; flex: 1; align-items: center; justify-content: flex-end; padding-right: 12px; }
.help { margin-right: 44px; }
.weather { gap: 6px; font-size: 11px; }
.icons { display: flex; align-items: center; gap: 13px; margin: 0 12px 0 16px; }
.clock { display: flex; flex-direction: column; gap: 2px; align-items: center; margin: 0 14px 0 10px; }
.notice { position: relative; width: 18px; height: 18px; }
.notice span { position: absolute; right: -3px; bottom: -3px; width: 11px; height: 11px; border: 1px solid #aaa; border-radius: 50%; background: #333; font-size: 8px; line-height: 9px; }
```
